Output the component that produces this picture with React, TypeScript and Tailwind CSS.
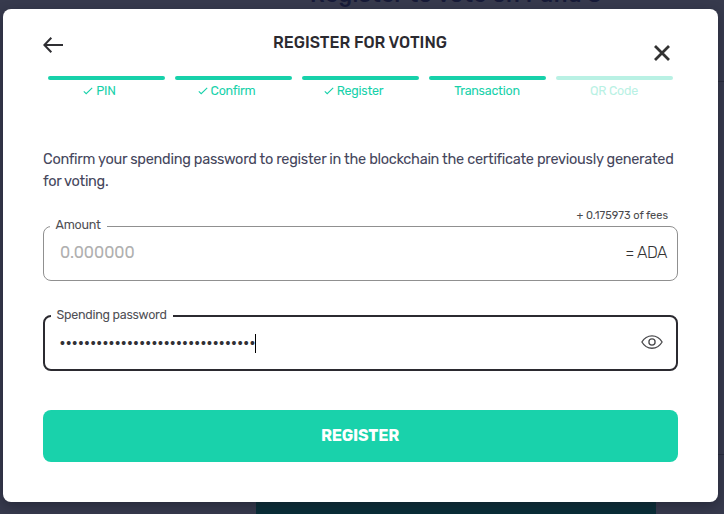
import type { ReactNode } from "react";

const PASSWORD_LENGTH = 32;

function Tick() {
  return (
    <svg width="10" height="8" viewBox="0 0 10 8" fill="none" className="mr-[3px] shrink-0">
      <path d="M0.8 4.3 3.2 6.7 9.2 0.8" stroke="currentColor" strokeWidth="1.1" />
    </svg>
  );
}

function Step({ label, done, pending }: { label: string; done?: boolean; pending?: boolean }) {
  return (
    <li className={pending ? "text-[#b9f1e4]" : "text-[#17d1aa]"}>
      <div className="h-1 rounded-full bg-current" />
      <div
        className={
          done
            ? "flex h-[22px] items-center justify-center pr-[14px] text-[12.5px] leading-[22px] tracking-[-0.25px]"
            : "flex h-[22px] items-center justify-center pr-px text-[12.5px] leading-[22px] tracking-[-0.25px]"
        }
      >
        {done && <Tick />}
        <span>{label}</span>
      </div>
    </li>
  );
}

function Field({ label, focused, children }: { label: string; focused?: boolean; children: ReactNode }) {
  return (
    <div
      className={
        focused
          ? "relative flex h-14 items-center justify-between rounded-lg border-2 border-[#2b2a30] pl-[15px] pr-[13px]"
          : "relative flex h-[55px] items-center justify-between rounded-lg border border-[#909090] pl-4 pr-[10px]"
      }
    >
      <span className="absolute -top-[10px] left-[6px] bg-white pl-[5.5px] pr-[6px] text-[12.5px] leading-4 tracking-[-0.25px] text-[#505055]">
        {label}
      </span>
      {children}
    </div>
  );
}

export default function App() {
  return (
    <div className="relative h-[514px] w-[724px] overflow-hidden bg-[#373a4d] font-['Rubik','Roboto',sans-serif]">
      <div className="absolute left-[310px] top-[-18px] whitespace-nowrap text-[22px] font-medium leading-[26px] tracking-[0.55px] text-[#171b38]">
        Register to vote on Fund 3
      </div>
      <div className="absolute right-0 top-[81px] h-px w-2 bg-[#292c3d]" />
      <div className="absolute right-0 top-[454px] h-px w-2 bg-[#292c3d]" />
      <div className="absolute bottom-0 left-[256px] h-5 w-[400px] bg-[#092e38]" />

      <main className="absolute left-[3px] top-[9px] flex h-[493px] w-[715px] flex-col rounded-[8px] bg-white px-10 shadow-[0_4px_12px_rgba(20,22,35,0.45)]">
        <header className="flex h-[67px] items-start justify-between">
          <svg width="20" height="16" viewBox="0 0 20 16" fill="none" className="mt-7" stroke="#2f2f33" strokeWidth="2">
            <path d="M20 8H1.5M8.3 0.8 1.4 8l6.9 7.2" />
          </svg>
          <h1 className="ml-[3px] mt-[22px] text-[16px] font-medium leading-6 text-[#2b2a30]">REGISTER FOR VOTING</h1>
          <svg width="16" height="16" viewBox="0 0 16 16" className="mr-2 mt-9" stroke="#333" strokeWidth="2.8">
            <path d="M1 1 15 15M15 1 1 15" />
          </svg>
        </header>

        <ol className="mx-[5px] grid grid-cols-5 gap-[10px]">
          <Step label="PIN" done />
          <Step label="Confirm" done />
          <Step label="Register" done />
          <Step label="Transaction" />
          <Step label="QR Code" pending />
        </ol>

        <p className="mt-[46px] whitespace-nowrap text-[14.5px] leading-[22px] tracking-[-0.275px] text-[#45465c]">
          Confirm your spending password to register in the blockchain the certificate previously generated
          <br />
          for voting.
        </p>

        <div className="mr-[10px] mt-[17px] h-[17px] text-right text-[11px] leading-[14px] text-[#4a4a4e]">
          + 0.175973 of fees
        </div>

        <Field label="Amount">
          <span className="mb-[2px] text-[16px] leading-6 text-[#b0b0b0]">0.000000</span>
          <span className="mb-px text-[16px] font-light leading-6 tracking-[-0.5px] text-[#333]">= ADA</span>
        </Field>

        <div className="mt-[34px]">
          <Field focused label="Spending password">
            <span className="flex items-center">
              <span className="-ml-px text-[18px] leading-5 tracking-[-0.75px] text-[#303035]">{"•".repeat(PASSWORD_LENGTH)}</span>
              <span className="h-[19px] w-px bg-black" />
            </span>
            <svg width="22" height="14" viewBox="0 0 22 14" fill="none" className="mb-[2px]" stroke="#4a4a4d" strokeWidth="1.3">
              <path d="M.9 7C5.7-1.3 16.3-1.3 21.1 7 16.3 15.3 5.7 15.3.9 7Z" />
              <circle cx="11" cy="7" r="3.1" />
            </svg>
          </Field>
        </div>

        <button className="mt-[39px] h-[52px] shrink-0 rounded-lg bg-[#19d2ab] pr-px text-[16px] font-bold leading-6 tracking-[-0.2px] text-white">
          REGISTER
        </button>
      </main>
    </div>
  );
}
